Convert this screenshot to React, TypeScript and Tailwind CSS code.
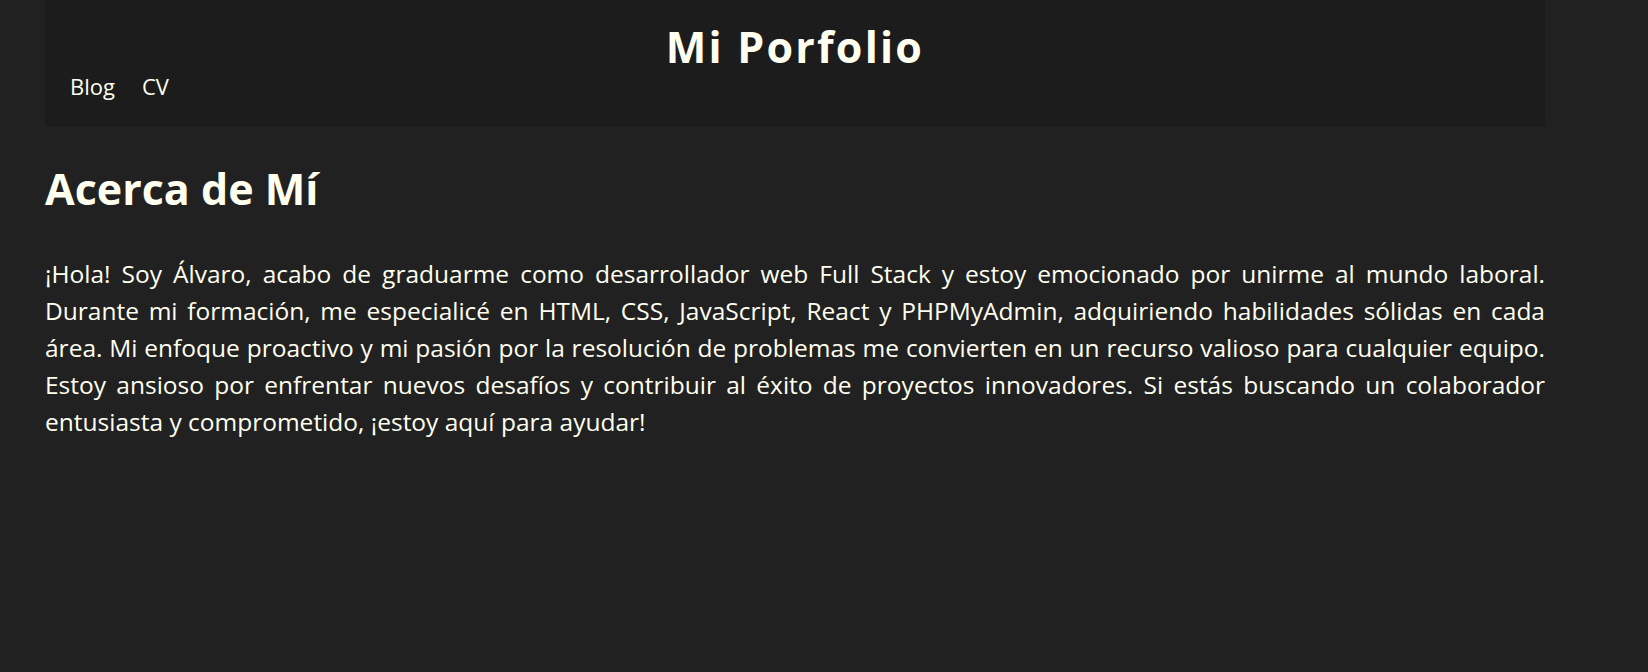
import React from "react";

const App: React.FC = () => {
  return (
    <div className="min-h-screen bg-[#212121] text-[#fffff0] font-['Open_Sans',sans-serif]">
      <div className="ml-[45px] w-[1500px]">
        {/* Header */}
        <header className="h-[126px] bg-[#1c1c1c] pt-[25px]">
          <h1 className="text-center text-[43px] leading-[43px] font-bold tracking-[2.2px]">Mi Porfolio</h1>
          <nav className="mt-[7px] flex gap-[27px] pl-[25px] text-[22px] leading-[22px]">
            <a href="#">Blog</a>
            <a href="#">CV</a>
          </nav>
        </header>

        {/* About */}
        <section>
          <h2 className="mt-[41px] text-[43px] leading-[43px] font-bold">Acerca de Mí</h2>
          <p className="mt-[45px] text-justify text-[24.5px] leading-[37px]">
            ¡Hola! Soy Álvaro, acabo de graduarme como desarrollador web Full Stack y estoy emocionado por unirme al
            mundo laboral. Durante mi formación, me especialicé en HTML, CSS, JavaScript, React y PHPMyAdmin,
            adquiriendo habilidades sólidas en cada área. Mi enfoque proactivo y mi pasión por la resolución de
            problemas me convierten en un recurso valioso para cualquier equipo. Estoy ansioso por enfrentar nuevos
            desafíos y contribuir al éxito de proyectos innovadores. Si estás buscando un colaborador entusiasta y
            comprometido, ¡estoy aquí para ayudar!
          </p>
        </section>
      </div>
    </div>
  );
};

export default App;
